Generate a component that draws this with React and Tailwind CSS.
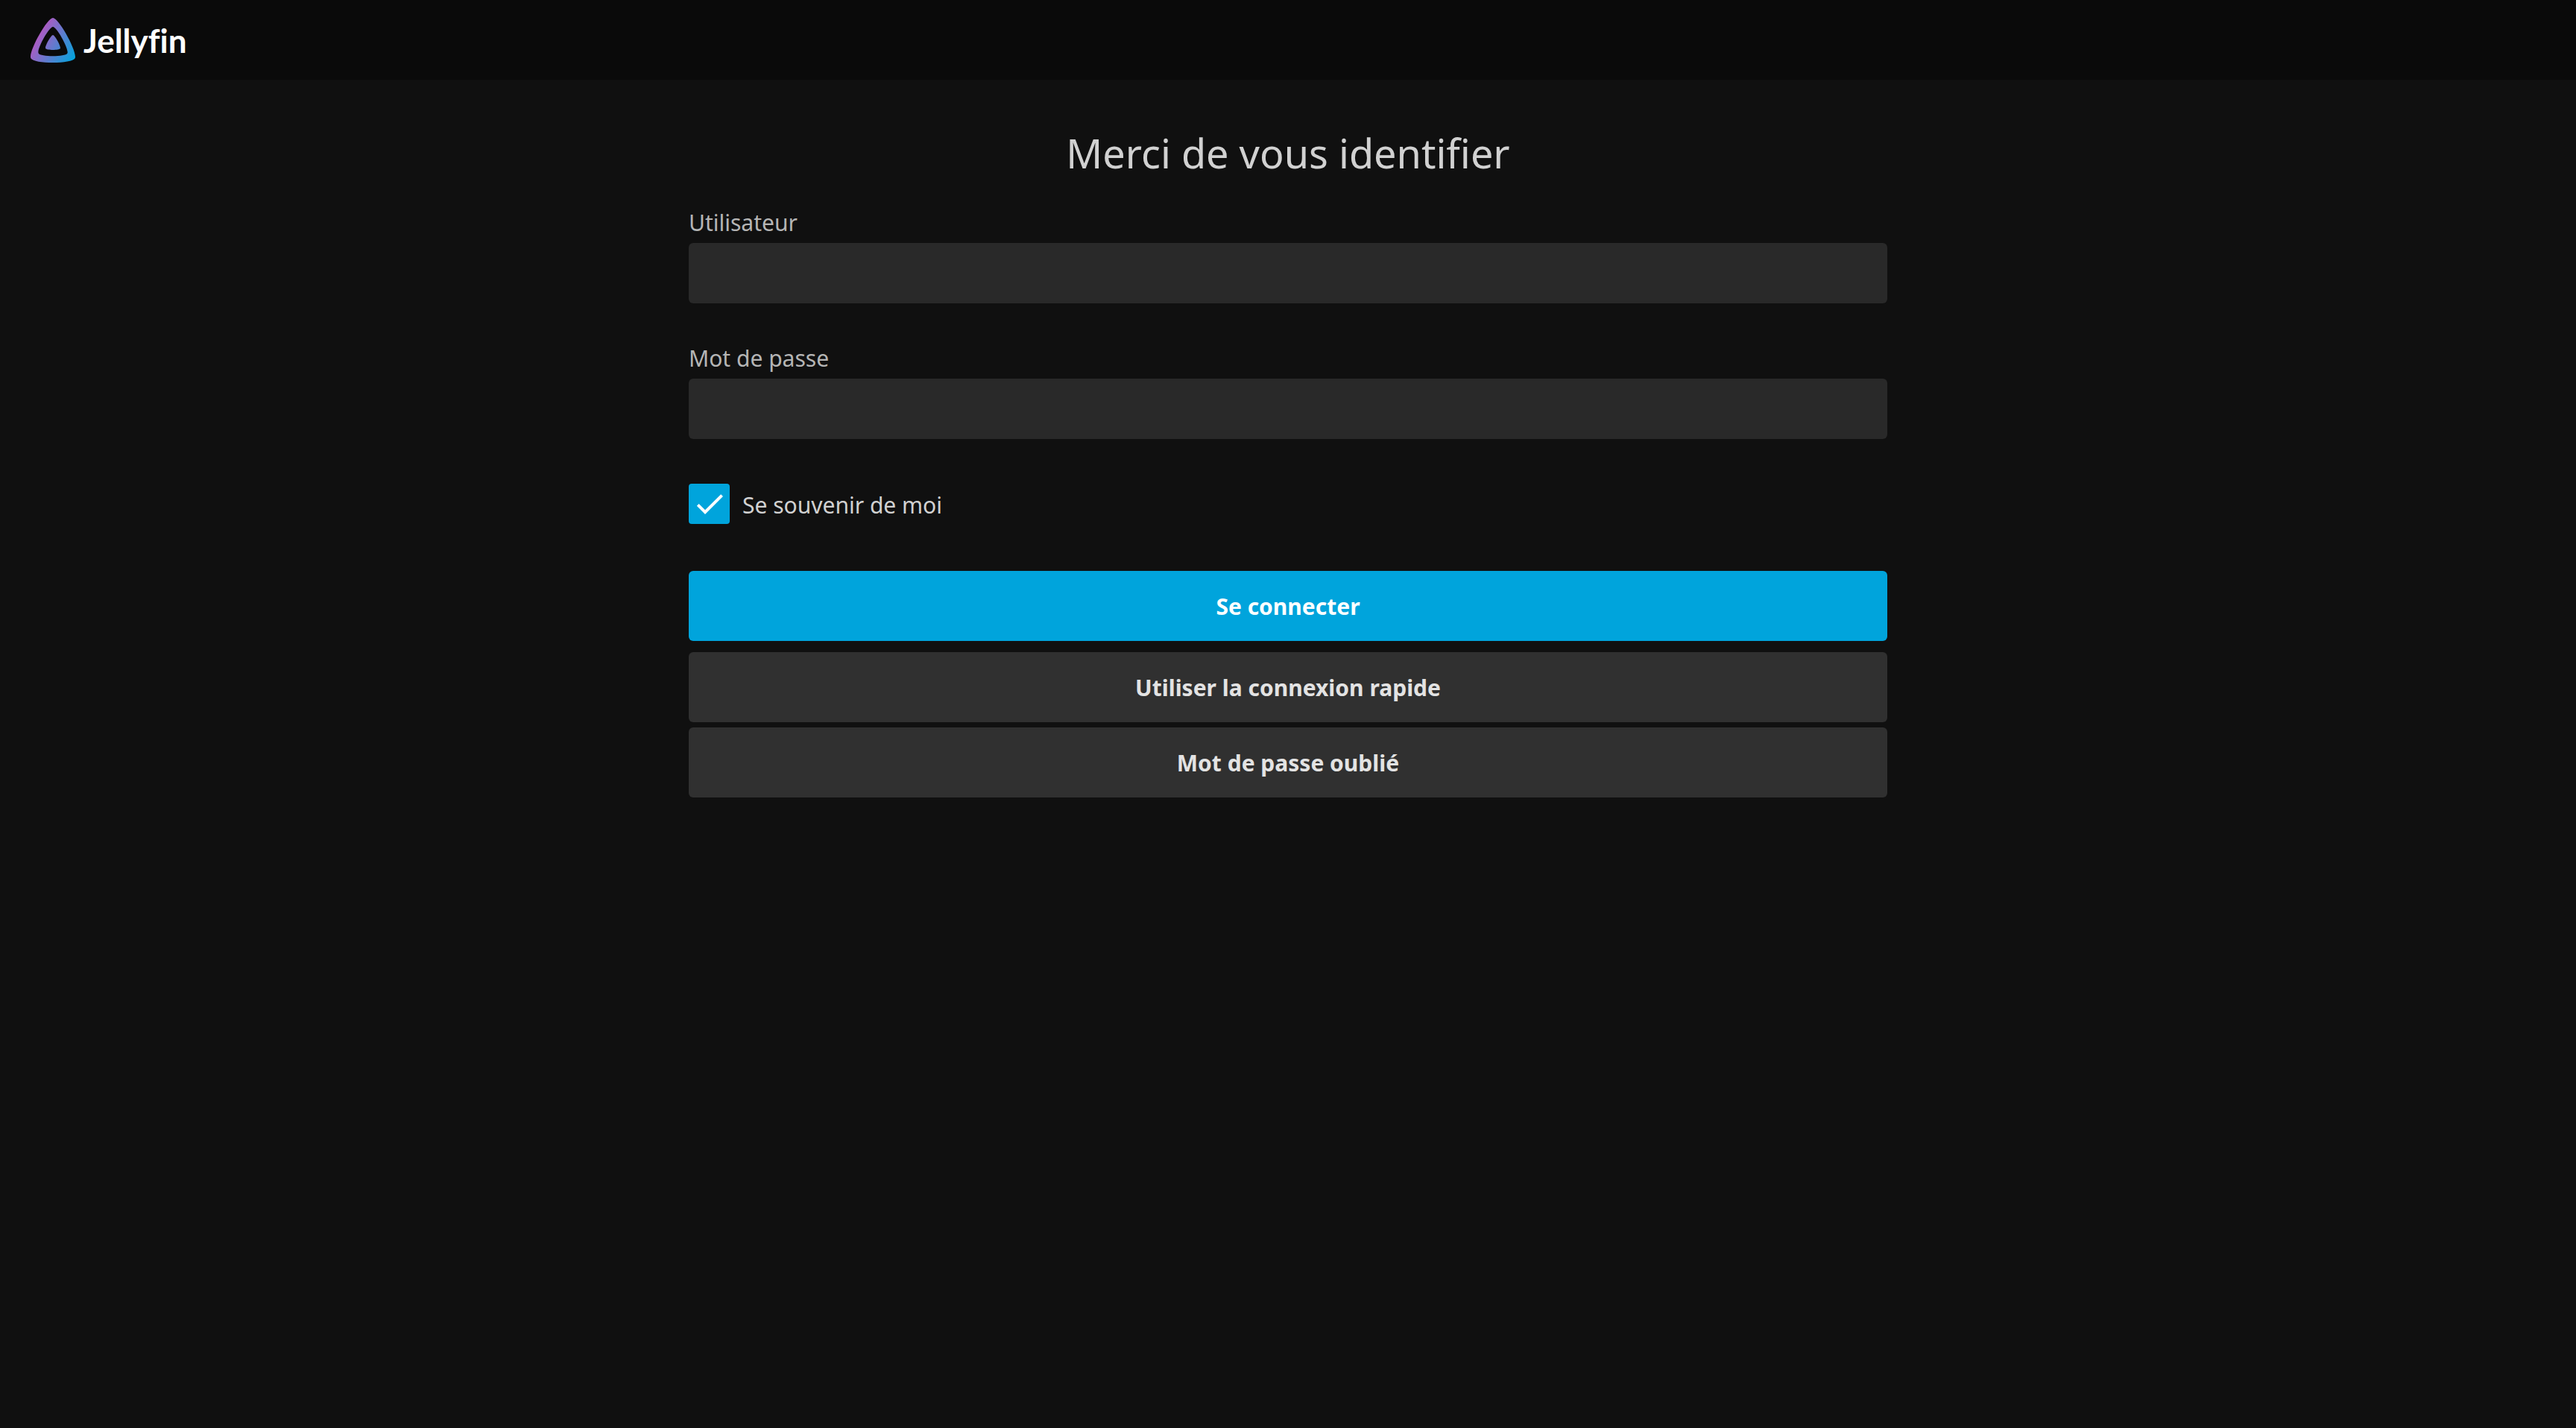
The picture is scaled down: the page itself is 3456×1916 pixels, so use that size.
import React from "react";

function Logo() {
  return (
    <a href="#" aria-label="Jellyfin" className="flex items-center gap-[11px] text-white">
      <svg viewBox="0 0 24 24" className="size-[60px]" aria-hidden="true">
        <defs>
          <linearGradient id="brand" gradientUnits="userSpaceOnUse" x1="4.4" y1="9.75" x2="24.4" y2="21.2">
            <stop offset="0" stopColor="#aa5cc3" />
            <stop offset="1" stopColor="#00a4dc" />
          </linearGradient>
        </defs>
        <path
          fill="url(#brand)"
          d="M12 .002C8.826.002-1.398 18.537.16 21.666c1.56 3.129 22.14 3.094 23.682 0C25.384 18.573 15.177 0 12 0zm7.76 18.949c-1.008 2.028-14.493 2.05-15.514 0C3.224 16.9 9.92 4.755 12.003 4.755c2.081 0 8.77 12.166 7.759 14.196zM12 9.198c-1.054 0-4.446 6.15-3.93 7.189.518 1.04 7.348 1.027 7.86 0 .511-1.027-2.874-7.19-3.93-7.19z"
        />
      </svg>
      <span className="font-[Lato,sans-serif] text-[44px] leading-[60px] font-bold [font-variant-ligatures:none]">
        Jellyfin
      </span>
    </a>
  );
}

function Field({ id, label, type }) {
  return (
    <div>
      <label htmlFor={id} className="mb-[7px] block leading-10 text-[#b5b5b5]">
        {label}
      </label>
      <input
        id={id}
        type={type}
        className="block h-[81px] w-full rounded-md bg-[#292929] px-3 text-white outline-none"
      />
    </div>
  );
}

export default function App() {
  return (
    <div className="min-h-screen bg-[#101010] font-['Noto_Sans',sans-serif] text-[30px] text-[#d1d1d1]">
      <header className="flex h-[107px] items-center bg-[#0a0a0a] px-[41px]">
        <Logo />
      </header>
      <main className="mx-auto max-w-[1608px] pt-[62px]">
        <h1 className="mb-[38px] text-center text-[54px] leading-[72px]">Merci de vous identifier</h1>
        <form onSubmit={(e) => e.preventDefault()}>
          <div className="flex flex-col gap-[54px]">
            <Field id="user" label="Utilisateur" type="text" />
            <Field id="password" label="Mot de passe" type="password" />
          </div>
          <label className="mt-[60px] flex w-fit items-center gap-[17px]">
            <span className="grid place-items-center">
              <input
                type="checkbox"
                defaultChecked
                className="peer col-start-1 row-start-1 h-[54px] w-[55px] appearance-none rounded border-4 border-[#00a4dc] checked:bg-[#00a4dc]"
              />
              <svg
                viewBox="0 0 24 24"
                aria-hidden="true"
                className="pointer-events-none invisible col-start-1 row-start-1 size-12 fill-white peer-checked:visible"
              >
                <path d="M9 16.17L4.83 12l-1.42 1.41L9 19 21 7l-1.41-1.41z" />
              </svg>
            </span>
            <span className="pt-1 leading-10">Se souvenir de moi</span>
          </label>
          <button type="submit" className="mt-[63px] h-[94px] w-full rounded-md bg-[#00a4dc] font-bold text-white">
            Se connecter
          </button>
          <div className="mt-[15px] flex flex-col gap-[7px] font-bold text-[#e3e3e3]">
            <button type="button" className="h-[94px] w-full rounded-md bg-[#303030]">
              Utiliser la connexion rapide
            </button>
            <button type="button" className="h-[94px] w-full rounded-md bg-[#303030]">
              Mot de passe oublié
            </button>
          </div>
        </form>
      </main>
    </div>
  );
}
